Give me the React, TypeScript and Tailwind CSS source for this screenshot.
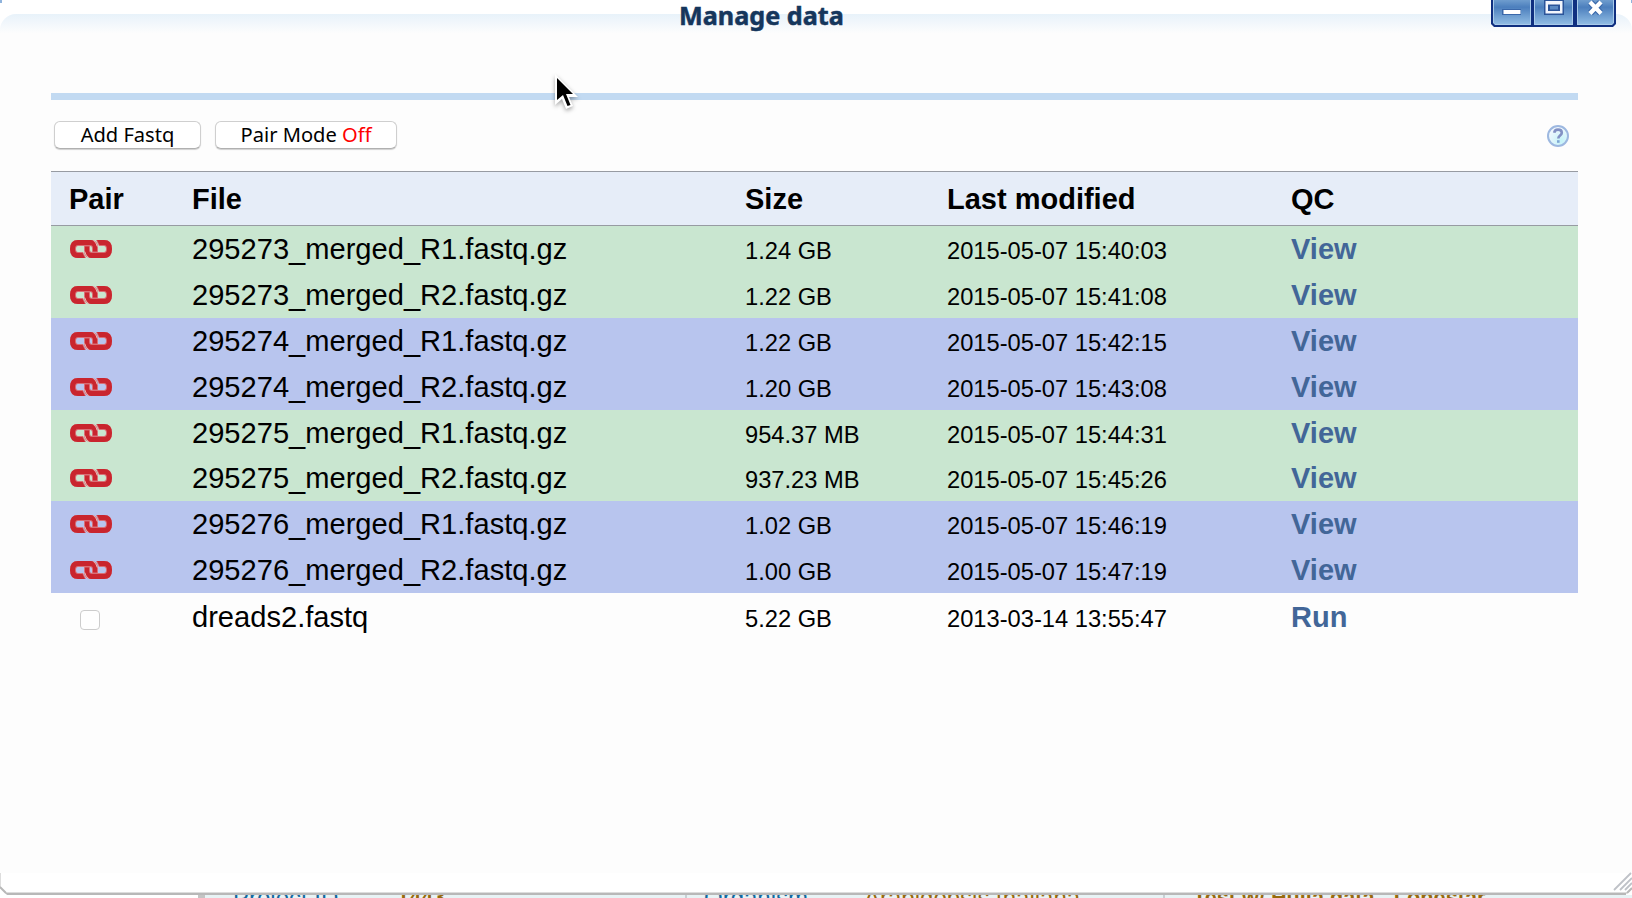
import React from "react";

type Row = { file: string; size: string; date: string; qc: string; tone: "green" | "blue" | "none"; h: string };

const rows: Row[] = [
  { file: "295273_merged_R1.fastq.gz", size: "1.24 GB", date: "2015-05-07 15:40:03", qc: "View", tone: "green", h: "h-[46px]" },
  { file: "295273_merged_R2.fastq.gz", size: "1.22 GB", date: "2015-05-07 15:41:08", qc: "View", tone: "green", h: "h-[46px]" },
  { file: "295274_merged_R1.fastq.gz", size: "1.22 GB", date: "2015-05-07 15:42:15", qc: "View", tone: "blue", h: "h-[46px]" },
  { file: "295274_merged_R2.fastq.gz", size: "1.20 GB", date: "2015-05-07 15:43:08", qc: "View", tone: "blue", h: "h-[46px]" },
  { file: "295275_merged_R1.fastq.gz", size: "954.37 MB", date: "2015-05-07 15:44:31", qc: "View", tone: "green", h: "h-[45px]" },
  { file: "295275_merged_R2.fastq.gz", size: "937.23 MB", date: "2015-05-07 15:45:26", qc: "View", tone: "green", h: "h-[46px]" },
  { file: "295276_merged_R1.fastq.gz", size: "1.02 GB", date: "2015-05-07 15:46:19", qc: "View", tone: "blue", h: "h-[46px]" },
  { file: "295276_merged_R2.fastq.gz", size: "1.00 GB", date: "2015-05-07 15:47:19", qc: "View", tone: "blue", h: "h-[46px]" },
  { file: "dreads2.fastq", size: "5.22 GB", date: "2013-03-14 13:55:47", qc: "Run", tone: "none", h: "h-[48px]" },
];

const tones = { green: "bg-[#c9e6d0]", blue: "bg-[#b8c5ee]", none: "" };
const columns = "grid grid-cols-[123px_553px_202px_344px_1fr] pl-[18px]";

function LinkIcon() {
  return (
    <svg width="42" height="18" viewBox="0 0 42 18" className="ml-px block">
      <path d="M8 0h14q6 1 6 7v5h-6V8q0-2-2-2H8Q6 6 6 9t2 3h5l3 6H8Q0 18 0 9t8-9z" fill="#d96f76" />
      <path d="M34 18H20q-6-1-6-7V6h6v4q0 2 2 2h12q2 0 2-3t-2-3h-5l-3-6h8q8 0 8 9t-8 9z" fill="#d96f76" />
      <path d="M8 0h13q6 1 6 7v4.500h-4V8q0-3-3-3H8Q5 5 5 9t3 4h4.500l2.500 5H8Q0 18 0 9t8-9z" fill="#c9252e" />
      <path d="M34 18H21q-6-1-6-7V6.500h4V10q0 3 3 3h12q3 0 3-4t-3-4h-4.500L27 0h7q8 0 8 9t-8 9z" fill="#c9252e" />
      <path d="M14.700 11.500q.8 4 4 6M27.300 6.500q-.8-4-4-6" stroke="#e9b5b2" strokeWidth="1" fill="none" />
    </svg>
  );
}

function HelpIcon() {
  return (
    <svg width="22" height="22" viewBox="0 0 22 22" fill="none" className="block">
      <defs>
        <radialGradient id="help" cx="0.65" cy="0.75" r="0.75">
          <stop offset="0" stopColor="#c4f3f8" />
          <stop offset="1" stopColor="#f3f8fe" />
        </radialGradient>
      </defs>
      <circle cx="11" cy="11" r="10" fill="url(#help)" stroke="#9db8e0" strokeWidth="2" />
      <path d="M7.200 7.700C7.500 5.500 9 4.600 11 4.600c2.300 0 3.800 1.200 3.800 3.100 0 2.700-3.500 3-3.500 5.800" stroke="#8291c4" strokeWidth="2.600" />
      <path d="M10 15.200h2.600v2.600H10z" fill="#7fa6d4" />
    </svg>
  );
}

function WindowButtons() {
  return (
    <svg width="126" height="27" viewBox="0 0 126 27" className="block">
      <defs>
        <linearGradient id="btn" x1="0" y1="0" x2="0" y2="1">
          <stop offset="0" stopColor="#6f9dce" />
          <stop offset="0.3" stopColor="#4c7fbd" />
          <stop offset="1" stopColor="#8fbbe3" />
        </linearGradient>
      </defs>
      <path d="M0 0h125v24l-3 3H3l-3-3z" fill="#0f2f80" />
      <path d="M2 0h38v25H4l-2-2zM43 0h39v25H43zM86 0h37v23l-2 2H86z" fill="#a9cbea" />
      <path d="M3 0h36v24H4l-1-1zM44 0h37v24H44zM87 0h35v23l-1 1H87z" fill="url(#btn)" />
      <path d="M11 9h19v6H11z" fill="#3a68aa" />
      <path d="M12.500 10h17v4h-17z" fill="#fff" />
      <path d="M53 0h20v15H53z" fill="#2b5499" />
      <path d="M54.500 1h17v12.500h-17z" fill="#f2f5fc" />
      <path d="M57 4.500h12v6.500H57z" fill="#2b5499" />
      <path d="M59 6h8v3.500h-8z" fill="#5a89c3" />
      <path d="m99.500 2.500 10 10.500m0-10.500-10 10.500" stroke="#3a68aa" strokeWidth="6.500" />
      <path d="m99 2 11 11.500M110 2 99 13.500" stroke="#fff" strokeWidth="4.200" />
    </svg>
  );
}

function PushButton({ children, width }: { children: React.ReactNode; width: string }) {
  return (
    <button className={`${width} h-[28px] rounded-[6px] border border-[#cfcfcf] border-b-[#b0b0b0] bg-white text-center font-['Noto_Sans',sans-serif] text-[20.1px] leading-[26px] whitespace-nowrap text-black shadow-[0_1px_1px_rgba(0,0,0,0.18)]`}>
      {children}
    </button>
  );
}

export default function App() {
  return (
    <div className="relative flex h-[898px] w-[1632px] flex-col overflow-hidden bg-white font-['Liberation_Sans',Arial,sans-serif] text-black">
      <header className="relative flex h-[37px] shrink-0 flex-col bg-white pt-[14px]">
        <div className="h-[23px] rounded-t-[16px] bg-linear-to-b from-[#e8f2fa] to-[#fdfdfd] to-85%" />
        <h1 className="absolute top-0 left-[679px] font-['Noto_Sans',sans-serif] text-[25.2px] leading-[30px] font-bold whitespace-nowrap text-[#15365c] [-webkit-text-stroke:0.5px_#15365c]">Manage data</h1>
        <div className="absolute top-0 right-[15px]"><WindowButtons /></div>
        <div className="absolute top-0 left-0 h-[3px] w-[2px] bg-[#8fb3dc]" />
        <div className="absolute top-0 right-0 h-[3px] w-px bg-[#8fb3dc]" />
      </header>

      <main className="flex h-[836px] shrink-0 flex-col bg-[#fdfdfd] pr-[54px] pl-[51px]">
        <div className="mt-[56px] h-[7px] shrink-0 bg-[#c2daf2]" />
        <div className="flex h-[71px] shrink-0 items-start justify-between pt-[21px] pr-[9px] pl-[3px]">
          <div className="flex gap-[14px]">
            <PushButton width="w-[147px]">Add Fastq</PushButton>
            <PushButton width="w-[182px]">Pair Mode <span className="text-[#ff0000]">Off</span></PushButton>
          </div>
          <div className="mt-[4px]"><HelpIcon /></div>
        </div>

        <div className={`${columns} h-[55px] shrink-0 items-center border-y border-[#979ba2] bg-[#e6edf8] pt-[2px] text-[29px] font-bold`}>
          <span>Pair</span><span>File</span><span>Size</span><span>Last modified</span><span>QC</span>
        </div>
        {rows.map((r) => (
          <div key={r.file} className={`${columns} ${tones[r.tone]} ${r.h} shrink-0 items-center whitespace-nowrap`}>
            {r.tone === "none" ? (
              <span className="mt-[5px] ml-[11px] block size-[20px] rounded-[4px] border border-[#cdcdcd] bg-white" />
            ) : (
              <LinkIcon />
            )}
            <span className="pt-[2px] text-[29.1px]">{r.file}</span>
            <span className="pt-[6px] text-[23.7px]">{r.size}</span>
            <span className="pt-[6px] text-[23.7px]">{r.date}</span>
            <a className="pt-[2px] text-[29px] font-bold text-[#426698]">{r.qc}</a>
          </div>
        ))}
      </main>

      <footer className="relative h-[20px] shrink-0 bg-white">
        <svg width="1632" height="22" className="absolute top-0 left-0" fill="none">
          <path d="M.5 0v14M5 19.500H1632" stroke="#ddd" />
        </svg>
      </footer>
      <div className="relative flex h-[5px] shrink-0 flex-col overflow-hidden border-t-2 border-[#b8b8b8] bg-white">
        <div className="relative ml-[198px] h-[3px] border-l-[7px] border-[#c4c4c4] bg-[#e8f3f5] text-[24px] leading-[24px] whitespace-nowrap">
          <span className="absolute top-[-9px] left-[28px] text-[#1268a0]">Project ID</span>
          <span className="absolute top-[-9px] left-[192px] text-[21.7px] font-bold text-[#98690c]">1443</span>
          <span className="absolute top-[-9px] left-[499px] text-[#1268a0]">Organism</span>
          <span className="absolute top-[-9px] left-[659px] text-[#98690c]">Arabidopsis thaliana</span>
          <span className="absolute top-[-9px] left-[988px] text-[21.7px] font-bold text-[#98690c]">Test w/ Huila data - Lonestar</span>
          <span className="absolute top-0 left-[480px] h-1 w-[2px] bg-[#c8d0d4]" />
          <span className="absolute top-0 left-[958px] h-1 w-[2px] bg-[#c8d0d4]" />
        </div>
      </div>

      <svg className="absolute bottom-[3px] left-0" width="8" height="9" fill="none"><path d="M0 9V2l7 7z" fill="#fff" /><path d="m0 1 6 6" stroke="#b8b8b8" strokeWidth="2" /></svg>
      <svg className="absolute right-0 bottom-[3px]" width="30" height="23" fill="none">
        <path d="m12 18 17-17M18 18 30 6M23 18l7-7" stroke="#bfc2c8" strokeWidth="1.800" />
        <path d="m24 22 6-6v7h-6z" fill="#fff" /><path d="m25 21 5-5" stroke="#b8b8b8" strokeWidth="2" />
      </svg>
      <svg className="absolute top-[74px] left-[554px] drop-shadow-[0_2px_2px_rgba(0,0,0,0.35)]" width="25" height="38" viewBox="0 0 25 38">
        <path d="M1 0v31l7-6 4 10 7-3-4-9h9z" fill="#fff" />
        <path d="M3 4v22l6-5 4.500 11 3-1-4.500-11h7z" fill="#000" />
      </svg>
    </div>
  );
}
